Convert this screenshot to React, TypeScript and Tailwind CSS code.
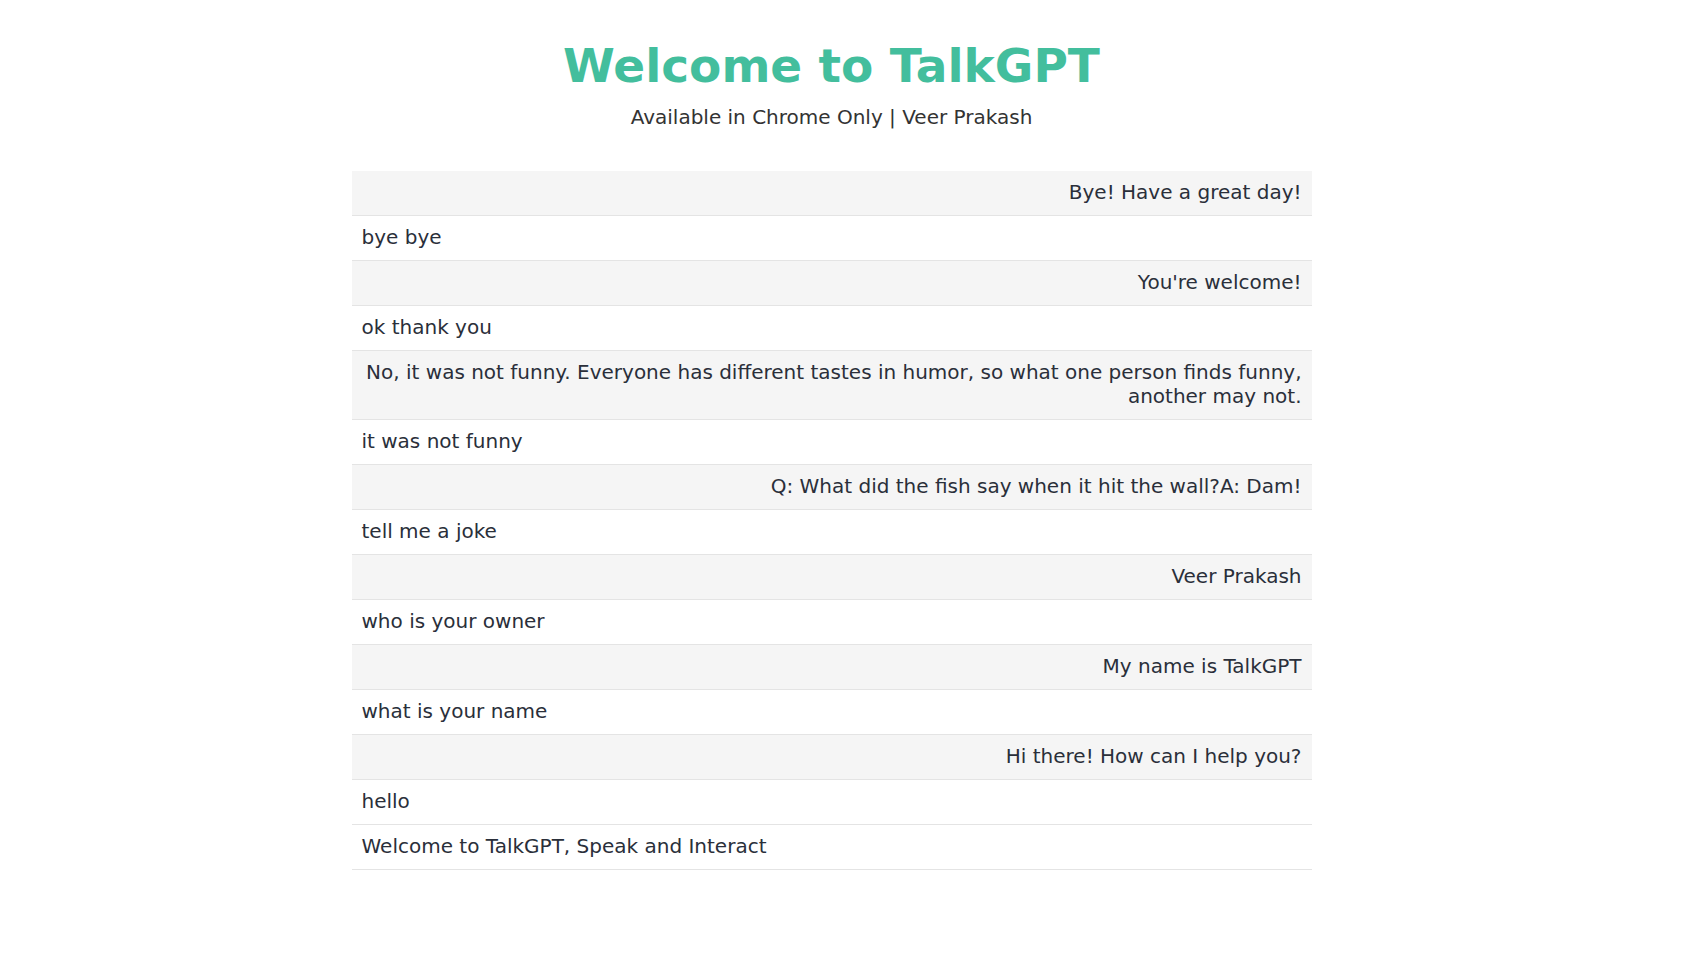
const messages = [
  { text: "Bye! Have a great day!", bot: true },
  { text: "bye bye", bot: false },
  { text: "You're welcome!", bot: true },
  { text: "ok thank you", bot: false },
  {
    text: "No, it was not funny. Everyone has different tastes in humor, so what one person finds funny, another may not.",
    bot: true,
  },
  { text: "it was not funny", bot: false },
  { text: "Q: What did the fish say when it hit the wall?A: Dam!", bot: true },
  { text: "tell me a joke", bot: false },
  { text: "Veer Prakash", bot: true },
  { text: "who is your owner", bot: false },
  { text: "My name is TalkGPT", bot: true },
  { text: "what is your name", bot: false },
  { text: "Hi there! How can I help you?", bot: true },
  { text: "hello", bot: false },
  { text: "Welcome to TalkGPT, Speak and Interact", bot: false },
];

const App = () => {
  return (
    <div className="min-h-screen bg-white pr-[19px] font-['DejaVu_Sans',sans-serif] text-[#2a2f3a]">
      {/* Header */}
      <div className="pt-[37px] text-center">
        <h1 className="text-[47px] leading-[58px] font-bold text-[#43be9d]">Welcome to TalkGPT</h1>
        <p className="mt-[10px] text-[20px] leading-[24px] text-[#333333]">
          Available in Chrome Only | Veer Prakash
        </p>
      </div>

      {/* Chat log */}
      <div className="mx-auto mt-[42px] w-[960px]">
        {messages.map((m, i) => (
          <div
            key={i}
            className={
              m.bot
                ? "border-b border-[#e4e4e4] bg-[#f5f5f5] px-[10px] pt-[9px] pb-[11px] text-right text-[20px] leading-[24px]"
                : "border-b border-[#e4e4e4] bg-white px-[10px] pt-[9px] pb-[11px] text-left text-[20px] leading-[24px]"
            }
          >
            {m.text}
          </div>
        ))}
      </div>
    </div>
  );
};

export default App;
